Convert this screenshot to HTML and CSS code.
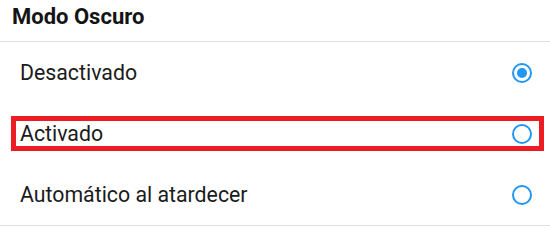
FILE: index.html
```html
<!DOCTYPE html>
<html lang="es">
<head>
<meta charset="utf-8">
<title>Modo Oscuro</title>
<link rel="stylesheet" href="styles.css">
</head>
<body>
<div class="panel">
  <div class="header">Modo Oscuro</div>
  <div class="options">
    <div class="row">
      <span class="label">Desactivado</span>
      <span class="radio checked"></span>
    </div>
    <div class="row highlighted">
      <span class="label">Activado</span>
      <span class="radio"></span>
    </div>
    <div class="row">
      <span class="label">Automático al atardecer</span>
      <span class="radio"></span>
    </div>
  </div>
</div>
</body>
</html>
```
FILE: styles.css
```css
html, body {
  margin: 0;
  padding: 0;
  background: #ffffff;
}
body {
  font-family: Roboto, "Noto Sans", "Liberation Sans", sans-serif;
  color: #1b1b1b;
}
.panel {
  width: 550px;
}
.header {
  height: 42px;
  box-sizing: border-box;
  padding: 3px 0 0 12px;
  font-size: 22px;
  font-weight: 700;
  line-height: 28px;
  color: #141414;
  border-bottom: 1px solid #dfe4e4;
}
.options {
  border-bottom: 1px solid #dfe4e4;
}
.row {
  position: relative;
  height: 61px;
  display: flex;
  align-items: center;
  justify-content: space-between;
  padding: 0 18px 0 20px;
}
.label {
  font-size: 21.3px;
  line-height: 24px;
}
.radio {
  width: 20px;
  height: 20px;
  box-sizing: border-box;
  border: 2px solid #2196f3;
  border-radius: 50%;
  display: flex;
  align-items: center;
  justify-content: center;
}
.radio.checked::before {
  content: "";
  width: 10px;
  height: 10px;
  border-radius: 50%;
  background: #2196f3;
}
.highlighted::after {
  content: "";
  position: absolute;
  left: 11px;
  right: 6px;
  top: 13px;
  height: 35px;
  box-sizing: border-box;
  border: 5px solid #ed1c24;
}
```
